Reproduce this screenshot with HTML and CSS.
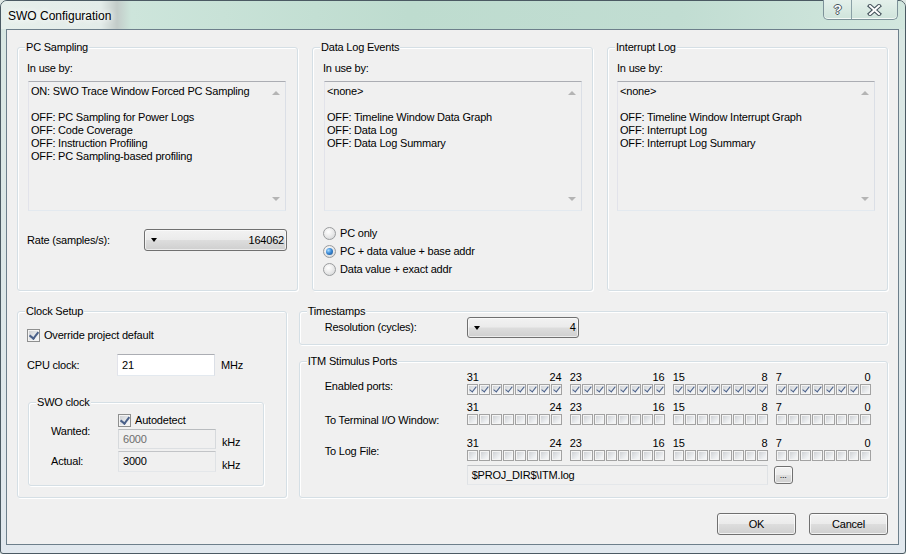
FILE: index.html
```html
<!DOCTYPE html>
<html lang="en">
<head>
    <meta charset="UTF-8">
    <title>SWO Configuration</title>
    <link rel="stylesheet" href="styles.css">
</head>
<body>
    <div class="window">
        <div class="titlebar">
            <span class="title">SWO Configuration</span>
            <div class="caption-btns">
                <span class="cap cap-help">?</span>
                <span class="cap cap-close">
                    <svg width="15" height="12" viewBox="0 0 15 12">
                        <path d="M3 2 L12 10 M12 2 L3 10" stroke="#46545d" stroke-width="4.2" stroke-linecap="square" fill="none"/>
                        <path d="M3 2 L12 10 M12 2 L3 10" stroke="#fff" stroke-width="2" stroke-linecap="square" fill="none"/>
                    </svg>
                </span>
            </div>
        </div>

        <div class="client">
            <div class="top-row">
                <div class="group g-pc">
                    <span class="group-title">PC Sampling</span>
                    <div class="line">In use by:</div>
                    <div class="listbox">
                        <div class="list-items">
                            <div>ON: SWO Trace Window Forced PC Sampling</div>
                            <div>&nbsp;</div>
                            <div>OFF: PC Sampling for Power Logs</div>
                            <div>OFF: Code Coverage</div>
                            <div>OFF: Instruction Profiling</div>
                            <div>OFF: PC Sampling-based profiling</div>
                        </div>
                        <div class="vscroll"><span class="arr-up"></span><span class="arr-down"></span></div>
                    </div>
                    <div class="rate-row">
                        <span class="rate-label">Rate (samples/s):</span>
                        <div class="combo combo-rate"><span class="combo-arrow"></span><span class="combo-value">164062</span></div>
                    </div>
                </div>

                <div class="group g-data">
                    <span class="group-title">Data Log Events</span>
                    <div class="line">In use by:</div>
                    <div class="listbox">
                        <div class="list-items">
                            <div>&lt;none&gt;</div>
                            <div>&nbsp;</div>
                            <div>OFF: Timeline Window Data Graph</div>
                            <div>OFF: Data Log</div>
                            <div>OFF: Data Log Summary</div>
                        </div>
                        <div class="vscroll"><span class="arr-up"></span><span class="arr-down"></span></div>
                    </div>
                    <div class="radios">
                        <label class="radio-row"><span class="radio"></span>PC only</label>
                        <label class="radio-row"><span class="radio on"></span>PC + data value + base addr</label>
                        <label class="radio-row"><span class="radio"></span>Data value + exact addr</label>
                    </div>
                </div>

                <div class="group g-int">
                    <span class="group-title">Interrupt Log</span>
                    <div class="line">In use by:</div>
                    <div class="listbox">
                        <div class="list-items">
                            <div>&lt;none&gt;</div>
                            <div>&nbsp;</div>
                            <div>OFF: Timeline Window Interrupt Graph</div>
                            <div>OFF: Interrupt Log</div>
                            <div>OFF: Interrupt Log Summary</div>
                        </div>
                        <div class="vscroll"><span class="arr-up"></span><span class="arr-down"></span></div>
                    </div>
                </div>
            </div>

            <div class="bottom-row">
                <div class="group g-clock">
                    <span class="group-title">Clock Setup</span>
                    <label class="check-row"><span class="cb on"></span>Override project default</label>
                    <div class="cpu-row">
                        <span class="cpu-label">CPU clock:</span>
                        <div class="edit edit-cpu">21</div>
                        <span class="unit">MHz</span>
                    </div>
                    <div class="group g-swo">
                        <span class="group-title">SWO clock</span>
                        <div class="swo-grid">
                            <span class="swo-label wanted">Wanted:</span>
                            <label class="check-row autodetect"><span class="cb on"></span>Autodetect</label>
                            <div class="edit edit-disabled">6000</div>
                            <span class="unit">kHz</span>
                            <span class="swo-label">Actual:</span>
                            <div class="edit edit-ro">3000</div>
                            <span class="unit">kHz</span>
                        </div>
                    </div>
                </div>

                <div class="right-col">
                    <div class="group g-ts">
                        <span class="group-title">Timestamps</span>
                        <div class="ts-row">
                            <span class="port-label">Resolution (cycles):</span>
                            <div class="combo combo-ts"><span class="combo-arrow"></span><span class="combo-value">4</span></div>
                        </div>
                    </div>

                    <div class="group g-itm">
                        <span class="group-title">ITM Stimulus Ports</span>
                        <div class="port-row">
                            <span class="port-label lbl-enabled">Enabled ports:</span>
                            <div class="ports" data-mask="on"></div>
                        </div>
                        <div class="port-row row-term">
                            <span class="port-label lbl-term">To Terminal I/O Window:</span>
                            <div class="ports" data-mask="off"></div>
                        </div>
                        <div class="port-row row-log">
                            <span class="port-label lbl-log">To Log File:</span>
                            <div class="ports" data-mask="off"></div>
                        </div>
                        <div class="path-row">
                            <div class="edit edit-ro edit-path">$PROJ_DIR$\ITM.log</div>
                            <div class="btn btn-browse">...</div>
                        </div>
                    </div>
                </div>
            </div>

            <div class="buttons">
                <div class="btn btn-dlg">OK</div>
                <div class="btn btn-dlg">Cancel</div>
            </div>
        </div>
    </div>

    <script>
        // build the 4 x 8 port checkbox blocks for each ITM row
        var ranges = [[31, 24], [23, 16], [15, 8], [7, 0]];
        document.querySelectorAll('.ports').forEach(function(ports) {
            var enabled = ports.dataset.mask === 'on';
            ranges.forEach(function(range) {
                var grp = document.createElement('div');
                grp.className = 'port-group';
                grp.innerHTML = '<div class="port-nums"><span>' + range[0] + '</span><span>' + range[1] + '</span></div>';
                var boxes = document.createElement('div');
                boxes.className = 'port-boxes';
                for (var bit = range[0]; bit >= range[1]; bit--) {
                    var cb = document.createElement('span');
                    cb.className = 'cb small' + (enabled && bit !== 0 ? ' on' : '');
                    boxes.appendChild(cb);
                }
                grp.appendChild(boxes);
                ports.appendChild(grp);
            });
        });
    </script>
</body>
</html>
```

FILE: styles.css
```css
* {
    box-sizing: border-box;
}
body {
    margin: 0;
    width: 906px;
    height: 554px;
    overflow: hidden;
    background: #dfe8e4;
    font-family: "Liberation Sans", Arial, sans-serif;
    font-size: 11px;
    letter-spacing: -0.2px;
    line-height: 13px;
    color: #000;
}
.window {
    width: 906px;
    height: 554px;
    border: 1px solid #4b5a63;
    border-radius: 7px 7px 3px 3px;
    background: linear-gradient(180deg, #d2e6de 0, #d9e7e3 40px, #e1e8ee 100%);
    padding: 0 6px 8px 5px;
    display: flex;
    flex-direction: column;
}

/* title bar */
.titlebar {
    height: 28px;
    display: flex;
    justify-content: space-between;
    align-items: flex-start;
    margin: 0 -6px 0 -5px;
    padding: 0 7px 0 7px;
    border-radius: 6px 6px 0 0;
    background: linear-gradient(90deg, #e6efeb 0, #e3ece9 100px, #c3ccc9 116px, #cde5db 130px, #bedccf 45%, #c1ddd2 75%, #d2e7de 100%);
}
.title {
    font-size: 12px;
    letter-spacing: 0;
    margin-top: 9px;
    color: #000;
    text-shadow: 0 0 6px #fff, 0 0 8px #fff;
}
.caption-btns {
    display: flex;
    height: 20px;
    margin-top: -1px;
    border: 1px solid #7d9299;
    border-top: none;
    border-radius: 0 0 5px 5px;
    background: linear-gradient(180deg, #e4f0eb, #cfe4db);
    box-shadow: inset 0 -1px 0 #f4faf7;
}
.cap {
    display: flex;
    align-items: center;
    justify-content: center;
}
.cap-help {
    width: 28px;
    border-right: 1px solid #8aa0a6;
    font-weight: bold;
    font-size: 13px;
    color: #fff;
    text-shadow: 1px 0 0 #46545d, -1px 0 0 #46545d, 0 1px 0 #46545d, 0 -1px 0 #46545d;
}
.cap-close {
    width: 45px;
}

/* client area */
.client {
    flex: 1;
    background: #f0f0f0;
    border: 1px solid #6d7f8b;
    padding: 17px 10px 0 10px;
}
.top-row {
    display: grid;
    grid-template-columns: 281px 281px 281px;
    column-gap: 14px;
}
.bottom-row {
    display: flex;
    margin-top: 20px;
}
.right-col {
    margin-left: 12px;
    width: 590px;
}

.group {
    position: relative;
    border: 1px solid #d5dfe5;
    border-radius: 3px;
    box-shadow: inset 1px 1px 0 #fff, 1px 1px 0 #fff;
}
.group-title {
    position: absolute;
    top: -7px;
    left: 7px;
    padding: 0 1px;
    background: #f0f0f0;
    white-space: nowrap;
}

.g-pc, .g-data, .g-int {
    height: 244px;
    padding: 14px 9px 0 9px;
}
.g-data {
    padding-left: 10px;
}

.listbox {
    display: flex;
    width: 258px;
    height: 130px;
    margin-top: 6px;
    background: #f0f0f0;
    border: 1px solid;
    border-color: #abadb3 #dbdfe6 #e3e9ef #e2e3ea;
}
.g-pc .listbox, .g-data .listbox {
    margin-left: 1px;
}
.list-items {
    flex: 1;
    padding: 3px 2px;
    white-space: nowrap;
}
.vscroll {
    width: 19px;
    display: flex;
    flex-direction: column;
    justify-content: space-between;
    align-items: center;
    padding: 9px 0 9px 0;
}
.arr-up, .arr-down {
    width: 0;
    height: 0;
    border-left: 4px solid transparent;
    border-right: 4px solid transparent;
}
.arr-up {
    border-bottom: 4px solid #b4b4b4;
}
.arr-down {
    border-top: 4px solid #b4b4b4;
}

.rate-row {
    display: flex;
    align-items: center;
    margin-top: 18px;
}
.rate-label {
    width: 117px;
}

.combo {
    display: flex;
    align-items: center;
    height: 22px;
    padding: 0 2px 0 6px;
    border: 1px solid #707070;
    border-radius: 3px;
    background: linear-gradient(180deg, #f2f2f2 0%, #ebebeb 48%, #dddddd 52%, #cfcfcf 100%);
    box-shadow: inset 0 0 0 1px rgba(255,255,255,0.6);
}
.combo-rate {
    width: 143px;
}
.combo-ts {
    width: 112px;
    height: 21px;
}
.combo-arrow {
    width: 0;
    height: 0;
    border-left: 3.5px solid transparent;
    border-right: 3.5px solid transparent;
    border-top: 4px solid #000;
}
.combo-value {
    margin-left: auto;
}

.radios {
    margin-top: 13px;
}
.radio-row {
    display: flex;
    align-items: center;
    height: 18px;
}
.radio {
    position: relative;
    width: 13px;
    height: 13px;
    margin-right: 4px;
    border-radius: 50%;
    border: 1px solid #9a9c9e;
    background: radial-gradient(circle at 40% 35%, #ffffff 0, #eeeeee 40%, #cfd1d3 100%);
}
.radio.on::after {
    content: '';
    position: absolute;
    left: 2px;
    top: 2px;
    width: 7px;
    height: 7px;
    border-radius: 50%;
    background: radial-gradient(circle at 35% 35%, #a8dcff 0, #3c8ad6 45%, #154b86 100%);
}

/* checkboxes */
.cb {
    position: relative;
    display: inline-block;
    width: 13px;
    height: 13px;
    border: 1px solid #8e8f8f;
    background: linear-gradient(135deg, #c9ccd0 0%, #eef0f2 70%, #fafafa 100%);
    box-shadow: inset 0 0 0 1px #f4f4f4;
}
.cb.on::after {
    content: '';
    position: absolute;
    left: 3px;
    top: 0px;
    width: 4px;
    height: 7px;
    border: solid #4a6089;
    border-width: 0 2px 2px 0;
    transform: rotate(38deg);
}
.cb.small {
    width: 11px;
    height: 11px;
    border-color: #a2a2a2;
}
.cb.small.on::after {
    left: 3px;
    top: 0px;
    width: 3px;
    height: 6px;
    border-width: 0 1.5px 1.5px 0;
}
.check-row {
    display: flex;
    align-items: center;
    height: 13px;
}
.check-row .cb {
    margin-right: 4px;
}

/* clock setup */
.g-clock {
    width: 270px;
    height: 187px;
    padding: 17px 9px 0 9px;
}
.cpu-row {
    display: flex;
    align-items: center;
    margin-top: 12px;
}
.cpu-label {
    width: 90px;
}
.edit {
    height: 22px;
    padding: 0 4px;
    display: flex;
    align-items: center;
    border: 1px solid;
    border-color: #abadb3 #dbdfe6 #e3e9ef #e2e3ea;
    background: #fff;
    white-space: nowrap;
}
.edit-cpu {
    width: 98px;
    margin-right: 6px;
}
.edit-disabled {
    height: 20px;
    color: #6d6d6d;
    background: #f0f0f0;
    border-color: #b9bcbf #d6d9dc #dcdfe2 #d6d9dc;
}
.edit-ro {
    height: 21px;
    background: #f0f0f0;
    border-color: #c2c4c7 #dfe2e5 #e4e7ea #dfe2e5;
}

.g-swo {
    width: 236px;
    margin: 26px 0 0 1px;
    padding: 11px 0 0 22px;
    height: 84px;
}
.swo-grid {
    display: grid;
    grid-template-columns: 61px 98px auto;
    grid-template-rows: 13px 20px 21px;
    row-gap: 2px;
    column-gap: 6px;
}
.swo-label {
    align-self: center;
}
.wanted {
    grid-row: 1 / span 2;
}
.autodetect {
    grid-column: 2 / span 2;
}
.swo-grid .unit {
    align-self: end;
}

/* timestamps + itm */
.g-ts {
    height: 34px;
    padding: 5px 0 0 25px;
}
.ts-row {
    display: flex;
    align-items: center;
}
.port-label {
    width: 142px;
    flex-shrink: 0;
    white-space: nowrap;
}
.g-itm {
    height: 137px;
    margin-top: 16px;
    padding: 9px 0 0 25px;
}
.port-row {
    display: flex;
}
.row-term {
    margin-top: 6px;
}
.row-log {
    margin-top: 10px;
}
.lbl-enabled {
    padding-top: 9px;
}
.lbl-term {
    padding-top: 13px;
}
.lbl-log {
    padding-top: 8px;
}
.ports {
    display: flex;
    gap: 8px;
}
.port-group {
    width: 95px;
}
.port-nums {
    display: flex;
    justify-content: space-between;
    height: 12px;
    line-height: 12px;
    letter-spacing: 0;
}
.port-boxes {
    display: flex;
    gap: 1px;
    margin-top: 1px;
}
.path-row {
    display: flex;
    align-items: center;
    margin: 4px 0 0 142px;
}
.edit-path {
    width: 301px;
    height: 20px;
    margin-right: 6px;
}

/* buttons */
.btn {
    display: flex;
    align-items: center;
    justify-content: center;
    border: 1px solid #707070;
    border-radius: 3px;
    background: linear-gradient(180deg, #f2f2f2 0%, #ebebeb 48%, #dddddd 52%, #cfcfcf 100%);
    box-shadow: inset 0 0 0 1px rgba(255,255,255,0.7);
}
.btn-browse {
    width: 19px;
    height: 18px;
    font-size: 9px;
    align-items: flex-end;
    padding-bottom: 3px;
    line-height: 9px;
}
.buttons {
    display: flex;
    justify-content: flex-end;
    gap: 13px;
    margin-top: 15px;
    padding-right: 0;
}
.btn-dlg {
    width: 79px;
    height: 22px;
}
```
